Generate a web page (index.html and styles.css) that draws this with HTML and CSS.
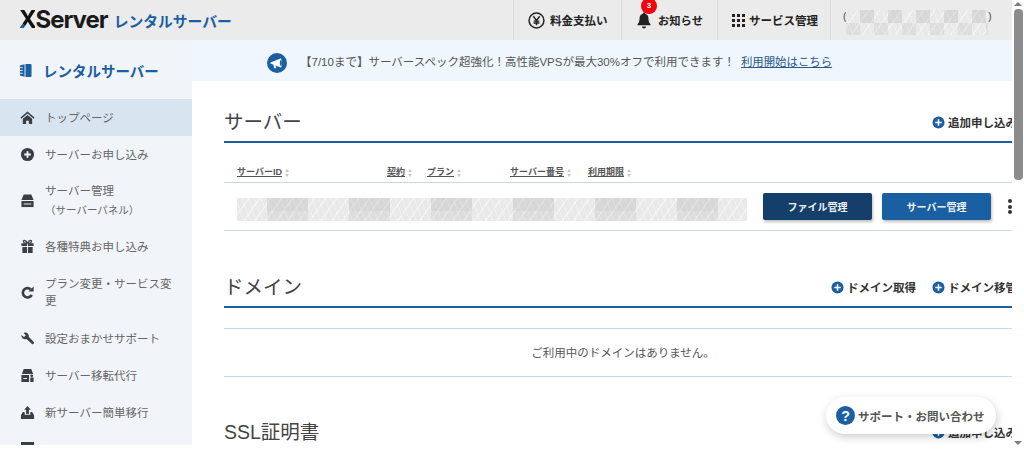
FILE: index.html
```html
<!DOCTYPE html>
<html lang="ja">
<head>
<meta charset="utf-8">
<title>XServer レンタルサーバー</title>
<link rel="stylesheet" href="styles.css">
</head>
<body>
<div class="window">
  <div class="viewport">
    <header class="topbar">
      <div class="logo"><span class="logo-word"><span class="logo-x">X</span>Server</span><span class="logo-sub">レンタルサーバー</span></div>
      <nav class="topnav">
        <a class="topnav-item pay">
          <svg class="ico-top" viewBox="0 0 16 16"><circle cx="8" cy="8" r="7" fill="none" stroke="#222" stroke-width="1.4"/><path d="M5 4l3 4 3-4M8 8v4.500M5.300 8.600h5.400M5.300 10.400h5.400" fill="none" stroke="#222" stroke-width="1.300"/></svg>
          <span>料金支払い</span>
        </a>
        <a class="topnav-item notice-link">
          <span class="bell">
            <svg class="ico-bell" viewBox="0 0 16 18"><path d="M8 1.500a1.200 1.200 0 0 1 1.200 1.200c2.300.6 3.300 2.500 3.300 5 0 3 .8 4.300 2 5.600v.9H1.500v-.9c1.200-1.300 2-2.600 2-5.600 0-2.500 1-4.400 3.300-5A1.200 1.200 0 0 1 8 1.500zM6 15.500h4a2 2 0 0 1-4 0z" fill="#222"/></svg>
            <span class="badge">3</span>
          </span>
          <span>お知らせ</span>
        </a>
        <a class="topnav-item service">
          <svg class="ico-grid" viewBox="0 0 13 13"><g fill="#222"><rect x="0" y="0" width="3" height="3"/><rect x="5" y="0" width="3" height="3"/><rect x="10" y="0" width="3" height="3"/><rect x="0" y="5" width="3" height="3"/><rect x="5" y="5" width="3" height="3"/><rect x="10" y="5" width="3" height="3"/><rect x="0" y="10" width="3" height="3"/><rect x="5" y="10" width="3" height="3"/><rect x="10" y="10" width="3" height="3"/></g></svg>
          <span>サービス管理</span>
        </a>
        <div class="account"><span class="paren">(</span><span class="mosaic mosaic-account"></span><span class="paren">)</span></div>
      </nav>
    </header>
    <div class="body-row">
      <aside class="sidebar">
        <div class="side-title">
          <svg class="ico-book" viewBox="0 0 14 16"><path d="M1 2.500L7 1h5.500A1 1 0 0 1 13.500 2v12a1 1 0 0 1-1 1H7l-6-1.500z" fill="#1b5fa3"/><path d="M6.500 1v14" stroke="#f1f5f9" stroke-width="1"/><path d="M1 5h3M1 8h3M1 11h3" stroke="#f1f5f9" stroke-width="1"/></svg>
          <span>レンタルサーバー</span>
        </div>
        <ul class="side-menu">
          <li class="side-item active h37">
            <svg class="ico-side" viewBox="0 0 16 16"><path d="M8 1.500L.5 8l1 1.200L8 3.700l6.500 5.500 1-1.200z M3 9.300L8 5.200l5 4.100V15H9.500v-3.500h-3V15H3z" fill="#3a3f45"/></svg>
            <span>トップページ</span>
          </li>
          <li class="side-item h37">
            <svg class="ico-side" viewBox="0 0 16 16"><circle cx="8" cy="8" r="7" fill="#3a3f45"/><path d="M8 4.500v7M4.500 8h7" stroke="#f1f5f9" stroke-width="2"/></svg>
            <span>サーバーお申し込み</span>
          </li>
          <li class="side-item h55">
            <svg class="ico-side" viewBox="0 0 16 16"><path d="M4 1.500h8l2.500 6h-13z" fill="#3a3f45"/><path d="M1.500 8.500h13V15h-13z" fill="#3a3f45"/><path d="M4 11.700h8" stroke="#f1f5f9" stroke-width="1"/></svg>
            <span class="two-line">サーバー管理<small>（サーバーパネル）</small></span>
          </li>
          <li class="side-item h37">
            <svg class="ico-side" viewBox="0 0 16 16"><path d="M1.500 4.500h6v3h-6zM8.500 4.500h6v3h-6zM2.500 8.500h5V15h-5zM8.500 8.500h5V15h-5z" fill="#3a3f45"/><path d="M8 4.500C6 .5 2.500 1 4 3.500c.5.800 2.500 1 4 1zM8 4.500c2-4 5.500-3.500 4-1-.5.800-2.500 1-4 1z" fill="none" stroke="#3a3f45" stroke-width="1.300"/></svg>
            <span>各種特典お申し込み</span>
          </li>
          <li class="side-item h55">
            <svg class="ico-side" viewBox="0 0 16 16"><path d="M12.500 10.500A5 5 0 1 1 11.500 4.700" fill="none" stroke="#3a3f45" stroke-width="2.800"/><path d="M9 7h5.500V1.500z" fill="#3a3f45"/></svg>
            <span class="wrap-text">プラン変更・サービス変更</span>
          </li>
          <li class="side-item h37">
            <svg class="ico-side" viewBox="0 0 16 16"><path d="M1.500 4.200L4.200 6.400 6.200 4.800 4 2c2.500-1.200 5.300.3 5.400 3 0 .5 0 .9-.1 1.200l5.400 5.600c.9 1 -.7 3 -1.900 2L7.300 8.700C4.500 9.300 1 7.500 1.500 4.200z" fill="#3a3f45"/></svg>
            <span>設定おまかせサポート</span>
          </li>
          <li class="side-item h37">
            <svg class="ico-side" viewBox="0 0 16 16"><path d="M4 1h8l2 5.500H2z" fill="#3a3f45"/><path d="M1.500 7.500h8.200V15H1.500zM11 10h3.500V15H11z" fill="#3a3f45"/><path d="M3.500 11.200h4" stroke="#f1f5f9" stroke-width="1"/><circle cx="12.500" cy="8.300" r="1.500" fill="#3a3f45"/></svg>
            <span>サーバー移転代行</span>
          </li>
          <li class="side-item h37">
            <svg class="ico-side" viewBox="0 0 16 16"><path d="M8 1l3.600 4H9.500v4.500h-3V5H4.400z" fill="#3a3f45"/><path d="M3 7.500h2V10.500h6V7.500h2l2 3.500V15H1v-4z" fill="#3a3f45"/></svg>
            <span>新サーバー簡単移行</span>
          </li>
          <li class="side-item h37">
            <svg class="ico-side" viewBox="0 0 16 16"><path d="M1 0h14v16H1z" fill="#3a3f45"/></svg>
          </li>
        </ul>
      </aside>
      <main class="main">
        <div class="announce">
          <svg class="ico-announce" viewBox="0 0 20 20"><circle cx="10" cy="10" r="10" fill="#1b5fa3"/><path d="M3.500 9.500L13.500 5.500a1.200 4.500 0 0 1 0 9L8.500 12.500l.6 2.800H7.200L6.500 11.800 3.500 10.600z" fill="#fff"/><ellipse cx="13.800" cy="10" rx="1" ry="3" fill="#1b5fa3"/></svg>
          <p class="announce-text">【7/10まで】サーバースペック超強化！高性能VPSが最大30%オフで利用できます！</p>
          <a class="announce-link">利用開始はこちら</a>
        </div>
        <div class="content">
          <section class="server-section">
            <div class="section-head">
              <h2>サーバー</h2>
              <div class="actions">
                <a class="add"><svg class="ico-plus" viewBox="0 0 14 14"><circle cx="7" cy="7" r="6.500" fill="#1b5fa3"/><path d="M7 3.500v7M3.500 7h7" stroke="#fff" stroke-width="1.700"/></svg>追加申し込み</a>
              </div>
            </div>
            <div class="table-head">
              <span class="th"><span class="th-label">サーバーID</span><i class="sort"></i></span>
              <span class="th"><span class="th-label">契約</span><i class="sort"></i></span>
              <span class="th"><span class="th-label">プラン</span><i class="sort"></i></span>
              <span class="th"><span class="th-label">サーバー番号</span><i class="sort"></i></span>
              <span class="th"><span class="th-label">利用期限</span><i class="sort"></i></span>
            </div>
            <div class="table-row">
              <span class="mosaic mosaic-row"></span>
              <button class="btn btn-dark">ファイル管理</button>
              <button class="btn btn-blue">サーバー管理</button>
              <span class="kebab"><i></i><i></i><i></i></span>
            </div>
          </section>
          <section class="domain-section">
            <div class="section-head">
              <h2>ドメイン</h2>
              <div class="actions">
                <a class="add"><svg class="ico-plus" viewBox="0 0 14 14"><circle cx="7" cy="7" r="6.500" fill="#1b5fa3"/><path d="M7 3.500v7M3.500 7h7" stroke="#fff" stroke-width="1.700"/></svg>ドメイン取得</a>
                <a class="add"><svg class="ico-plus" viewBox="0 0 14 14"><circle cx="7" cy="7" r="6.500" fill="#1b5fa3"/><path d="M7 3.500v7M3.500 7h7" stroke="#fff" stroke-width="1.700"/></svg>ドメイン移管</a>
              </div>
            </div>
            <div class="empty">ご利用中のドメインはありません。</div>
          </section>
          <section class="ssl-section">
            <div class="section-head">
              <h2>SSL証明書</h2>
              <div class="actions">
                <a class="add"><svg class="ico-plus" viewBox="0 0 14 14"><circle cx="7" cy="7" r="6.500" fill="#1b5fa3"/><path d="M7 3.500v7M3.500 7h7" stroke="#fff" stroke-width="1.700"/></svg>追加申し込み</a>
              </div>
            </div>
          </section>
        </div>
      </main>
    </div>
    <a class="support">
      <svg class="ico-help" viewBox="0 0 20 20"><circle cx="10" cy="10" r="10" fill="#1b5fa3"/><text x="10" y="15.500" text-anchor="middle" class="help-mark">?</text></svg>
      <span>サポート・お問い合わせ</span>
    </a>
  </div>
  <div class="scrollbar">
    <span class="arrow arrow-up"></span>
    <span class="thumb"></span>
    <span class="arrow arrow-down"></span>
  </div>
</div>
</body>
</html>
```
FILE: styles.css
```css
* { box-sizing: border-box; }
html, body { margin: 0; height: 100%; overflow: hidden; background: #fff; }
body { font-family: "Liberation Sans", "Noto Sans CJK JP", sans-serif; color: #444; }
ul { list-style: none; margin: 0; padding: 0; }
h2, p { margin: 0; font-weight: 400; }
svg { display: block; flex: none; }

.window { display: flex; width: 1024px; height: 450px; }
.viewport { position: relative; width: 1012px; height: 445px; overflow: hidden; display: flex; flex-direction: column; }

.topbar { flex: none; width: 1012px; height: 40px; background: #ebebeb; display: flex; justify-content: space-between; }
.logo { display: flex; align-items: center; padding-left: 19px; gap: 6px; }
.logo-word { font: 700 24px/1 "Inter", "Liberation Sans", sans-serif; letter-spacing: -1px; color: #1a1a1a; }
.logo-x { background: linear-gradient(45deg, #1b5fa3 32%, #111 32%); -webkit-background-clip: text; background-clip: text; color: transparent; }
.logo-sub { font-size: 14.800px; font-weight: 700; color: #1b5fa3; white-space: nowrap; }

.topnav { display: flex; }
.topnav-item { display: flex; align-items: center; height: 40px; border-left: 1px solid #dcdcdc; font-size: 11.500px; font-weight: 700; color: #222; }
.pay { width: 108px; padding-left: 14px; gap: 5px; }
.notice-link { width: 96px; padding-left: 14px; gap: 6px; font-size: 11.300px; }
.service { width: 113px; padding-left: 14px; gap: 4px; }
.ico-top { width: 17px; height: 17px; }
.ico-grid { width: 13px; height: 13px; }
.bell { position: relative; display: block; width: 16px; height: 18px; }
.ico-bell { width: 16px; height: 18px; }
.badge { position: absolute; left: 5px; top: -13px; width: 16px; height: 16px; border-radius: 50%; background: #f5000f; color: #fff; font-size: 8px; line-height: 16px; text-align: center; font-weight: 700; }
.account { width: 182px; height: 40px; border-left: 1px solid #dcdcdc; padding: 10px 0 0 12px; display: flex; align-items: flex-start; }
.paren { font-size: 10px; line-height: 13px; color: #444; }

.mosaic { display: block; background-color: #e9e9e9;
  background-image:
    linear-gradient(90deg, rgba(0,0,0,.08) 0 50%, transparent 50% 100%),
    linear-gradient(90deg, rgba(0,0,0,.05) 0 50%, transparent 50% 100%),
    repeating-linear-gradient(125deg, rgba(255,255,255,.4) 0 1.500px, transparent 1.500px 9px),
    repeating-linear-gradient(70deg, rgba(255,255,255,.3) 0 1px, transparent 1px 6px);
  background-repeat: repeat-x, repeat-x, repeat, repeat;
  background-size: 82px 56%, 82px 44%, auto, auto;
  background-position: 30px 0, 30px 100%, 0 0, 0 0;
}
.mosaic-account { width: 142px; height: 25px; background-size: 28px 50%, 28px 50%, auto, auto; background-position: 14px 0, 0 100%, 0 0, 0 0; }
.mosaic-row { width: 510px; height: 23px; }

.body-row { flex: 1; display: flex; min-height: 0; }
.sidebar { flex: none; width: 192px; background: #f1f5f9; overflow: hidden; }
.side-title { height: 59px; display: flex; align-items: center; padding: 2px 0 0 19px; gap: 11px; color: #1b5fa3; font-size: 14.500px; font-weight: 700; }
.ico-book { width: 13px; height: 15px; }
.side-item { display: flex; align-items: center; padding-left: 20px; font-size: 11.500px; color: #666; gap: 10px; }
.h37 { height: 37px; padding-bottom: 1px; }
.h55 { height: 55px; }
.active { background: #d8e5f0; }
.ico-side { width: 15px; height: 15px; }
.two-line { display: flex; flex-direction: column; gap: 4px; line-height: 15px; }
.two-line small { font-size: 10.500px; }
.wrap-text { width: 130px; line-height: 17px; }

.main { flex: 1; min-width: 0; overflow: hidden; }
.announce { height: 41px; background: #eff6fd; display: flex; align-items: center; padding-left: 75px; font-size: 11.500px; color: #555; }
.ico-announce { width: 20px; height: 20px; margin: 4px 13px 0 0; }
.announce-text { white-space: nowrap; }
.announce-link { margin-left: 6px; font-size: 11.400px; color: #2a5a88; text-decoration: underline; white-space: nowrap; }

.content { width: 798px; margin-left: 32px; }
.section-head { display: flex; justify-content: space-between; align-items: center; height: 38px; border-bottom: 2px solid #1b5fa3; }
.section-head h2 { font-size: 19.500px; color: #444; line-height: 1; }
.actions { display: flex; gap: 16px; margin: 0 5px 2px 0; }
.add { display: flex; align-items: center; gap: 3px; font-size: 11.500px; font-weight: 700; color: #333; white-space: nowrap; }
.ico-plus { width: 13px; height: 13px; }

.server-section { padding-top: 24px; }
.table-head { display: grid; grid-template-columns: 150px 40px 83px 78px auto; height: 40px; padding: 22px 0 0 13px; border-bottom: 1px solid #c6d9ea; font-size: 9px; font-weight: 700; color: #555; line-height: 15px; }
.th { display: flex; align-items: center; height: 15px; white-space: nowrap; }
.th-label { text-decoration: underline; }
.sort { position: relative; display: block; width: 5px; height: 8px; margin-left: 3px; }
.sort::before, .sort::after { content: ""; position: absolute; left: 0; width: 0; height: 0; border-left: 2.500px solid transparent; border-right: 2.500px solid transparent; }
.sort::before { top: 0; border-bottom: 3px solid #c8c8c8; }
.sort::after { bottom: 0; border-top: 3px solid #c8c8c8; }
.table-row { display: flex; align-items: center; height: 48px; padding: 0 0 0 13px; border-bottom: 1px solid #c6d9ea; }
.table-row .mosaic-row { margin-top: 6px; margin-right: 16px; }
.btn { width: 109px; height: 27px; border: 0; border-radius: 2px; color: #edf2f7; font: 700 10px "Liberation Sans", "Noto Sans CJK JP", sans-serif; box-shadow: 1px 2px 3px rgba(0,0,0,.25); margin-right: 10px; padding: 0; }
.btn-dark { background: #153f6b; }
.btn-blue { background: #1b5fa3; }
.kebab { display: flex; flex-direction: column; gap: 1.500px; margin-left: 7px; }
.kebab i { display: block; width: 4px; height: 4px; border-radius: 50%; background: #333; }

.domain-section { padding-top: 39px; }
.empty { height: 49px; margin-top: 20px; padding-bottom: 2px; border-top: 1px solid #c6d9ea; border-bottom: 1px solid #c6d9ea; display: flex; align-items: center; justify-content: center; font-size: 11.500px; color: #555; }

.ssl-section { padding-top: 38px; }

.support { position: absolute; left: 826px; top: 397px; width: 170px; height: 37px; border-radius: 19px; background: #fff; box-shadow: 1px 3px 8px rgba(0,0,0,.2); display: flex; align-items: center; padding-left: 10px; gap: 3px; font-size: 11.500px; font-weight: 700; color: #555; white-space: nowrap; }
.ico-help { width: 19px; height: 19px; }
.help-mark { font: 700 15px "Liberation Sans", sans-serif; fill: #fff; }

.scrollbar { flex: none; width: 12px; height: 450px; background: #fff; display: flex; flex-direction: column; align-items: center; position: relative; }
.thumb { display: block; width: 9px; height: 171px; margin-top: 3px; border-radius: 4px; background: #8c8c8c; }
.arrow { display: block; width: 0; height: 0; border-left: 4px solid transparent; border-right: 4px solid transparent; }
.arrow-up { margin-top: 2px; border-bottom: 4px solid #7c7c7c; }
.arrow-down { position: absolute; bottom: 5px; left: 2px; border-top: 4px solid #7c7c7c; }
```
